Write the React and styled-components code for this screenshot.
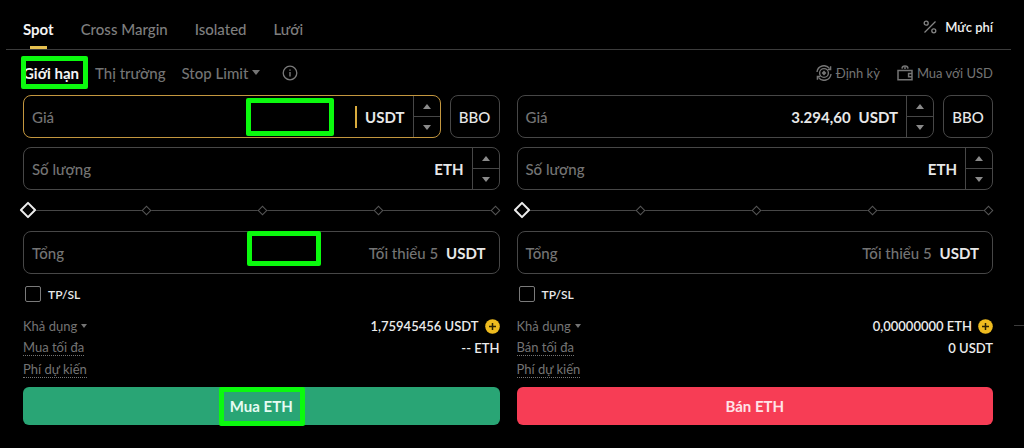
import React, { useState } from 'react';
import styled, { createGlobalStyle } from 'styled-components';

const GlobalStyle = createGlobalStyle`
  * {
    box-sizing: border-box;
  }
  body {
    margin: 0;
    background: #000;
    color: #e8e8e8;
    font-family: Lato, 'Noto Sans', sans-serif;
    font-size: 15px;
  }
  button, input {
    font-family: inherit;
    font-size: inherit;
    color: inherit;
  }
`;

const Page = styled.main`
  position: relative;
  padding: 9px 13px 16px 6px;
`;

const Header = styled.header`
  display: flex;
  justify-content: space-between;
  height: 41px;
  padding: 0 18px 0 17px;
  border-bottom: 1px solid #3c3c3c;
`;

const Tabs = styled.nav`
  display: flex;
  gap: 27px;
`;

const Tab = styled.button`
  position: relative;
  padding: 0;
  border: 0;
  background: none;
  color: ${({ $active }) => $active ? '#f4f4f4' : '#7e7e7e'};
  font-weight: ${({ $active }) => $active ? 700 : 500};
  cursor: pointer;
  &::after {
    content: '';
    display: ${({ $active }) => $active ? 'block' : 'none'};
    position: absolute;
    bottom: 0;
    left: calc(50% - 8px);
    width: 17px;
    height: 3px;
    background: #e6c04f;
  }
`;

const FeeLink = styled.a`
  display: flex;
  align-items: center;
  gap: 8px;
  padding-bottom: 4px;
  color: #f0f0f0;
  font-size: 13px;
  font-weight: 600;
  text-decoration: none;
`;

const SubHeader = styled.div`
  display: flex;
  justify-content: space-between;
  align-items: center;
  height: 45px;
  padding: 0 18px 0 17px;
`;

const OrderTypes = styled.div`
  display: flex;
  align-items: center;
  gap: 16px;
`;

const OrderType = styled.button`
  position: relative;
  display: flex;
  align-items: center;
  gap: 4px;
  padding: 0;
  border: 0;
  background: none;
  color: ${({ $active }) => $active ? '#f4f4f4' : '#747474'};
  font-weight: ${({ $active }) => $active ? 700 : 500};
  cursor: pointer;
`;

const InfoButton = styled.button`
  display: flex;
  margin-left: 6px;
  padding: 0;
  border: 0;
  background: none;
  color: #7a7a7a;
`;

const Links = styled.div`
  display: flex;
  gap: 17px;
`;

const ToolLink = styled.a`
  display: flex;
  align-items: center;
  gap: 4px;
  color: #747474;
  font-size: 13px;
  text-decoration: none;
`;

const Columns = styled.div`
  display: grid;
  grid-template-columns: 1fr 1fr;
  gap: 17px;
  padding: 0 18px 0 17px;
`;

const Form = styled.form`
  display: flex;
  flex-direction: column;
`;

const FieldRow = styled.div`
  position: relative;
  display: flex;
  gap: 9px;
  margin-bottom: 9px;
`;

const Field = styled.div`
  flex: 1;
  min-width: 0;
  display: flex;
  align-items: center;
  height: 43px;
  padding-left: 8px;
  border: 1px solid ${({ $focused }) => $focused ? '#c4973f' : '#474747'};
  border-radius: 8px;
`;

const FieldLabel = styled.label`
  color: #747474;
  font-weight: 500;
  white-space: nowrap;
`;

const FieldInput = styled.input`
  flex: 1;
  min-width: 0;
  padding: 0;
  border: 0;
  outline: 0;
  background: none;
  text-align: right;
  font-weight: 700;
  &::placeholder {
    color: #747474;
    font-weight: 500;
  }
`;

const Caret = styled.span`
  width: 2px;
  height: 22px;
  background: #d9ab3d;
`;

const Unit = styled.span`
  margin: 0 8px;
  font-weight: 700;
  &:last-child {
    margin-right: 13px;
  }
`;

const Stepper = styled.div`
  align-self: stretch;
  display: flex;
  flex-direction: column;
  width: 27px;
  border-left: 1px solid #474747;
`;

const Step = styled.button`
  flex: 1;
  display: flex;
  align-items: center;
  justify-content: center;
  padding: 0;
  border: 0;
  background: none;
  color: #8a8a8a;
  & + & {
    border-top: 1px solid #474747;
  }
`;

const BboButton = styled.button`
  width: 50px;
  padding: 0;
  border: 1px solid #474747;
  border-radius: 8px;
  background: none;
  font-weight: 500;
`;

const SliderWrap = styled.div`
  position: relative;
  height: 20px;
  margin: 1px 0 11px;
  padding-left: 3px;
  display: flex;
  align-items: center;
  justify-content: space-between;
  &::before {
    content: '';
    position: absolute;
    left: 5px;
    right: 5px;
    height: 1px;
    background: #474747;
  }
`;

const Mark = styled.span`
  position: relative;
  width: 7px;
  height: 7px;
  margin: 0 1px;
  border: 1px solid #565656;
  background: #000;
  transform: rotate(45deg);
`;

const Range = styled.input`
  position: absolute;
  left: -1px;
  width: calc(100% + 2px);
  margin: 0;
  appearance: none;
  background: none;
  &::-webkit-slider-thumb {
    appearance: none;
    width: 12px;
    height: 12px;
    border: 2px solid #ececec;
    border-radius: 1px;
    background: #000;
    transform: rotate(45deg);
  }
`;

const CheckLabel = styled.label`
  display: flex;
  align-items: center;
  gap: 7px;
  height: 16px;
  margin: 3px 0 13px 2px;
  font-size: 12px;
  font-weight: 600;
`;

const Checkbox = styled.input`
  appearance: none;
  width: 16px;
  height: 16px;
  margin: 0;
  border: 1px solid #7a7a7a;
  border-radius: 2px;
  &:checked {
    background: #e6c04f;
  }
`;

const Summary = styled.dl`
  margin: 0 0 6px;
  font-size: 13px;
`;

const SummaryRow = styled.div`
  display: flex;
  justify-content: space-between;
  align-items: center;
  height: 22px;
`;

const Term = styled.dt`
  display: flex;
  align-items: center;
  gap: 4px;
  line-height: 15px;
  color: #747474;
  border-bottom: ${({ $dotted }) => $dotted ? '1px dotted #747474' : '0'};
`;

const Amount = styled.dd`
  display: flex;
  align-items: center;
  gap: 6px;
  margin: 0;
  color: #ececec;
  font-weight: 600;
`;

const AddButton = styled.button`
  display: flex;
  padding: 0;
  border: 0;
  background: none;
`;

const Submit = styled.button`
  position: relative;
  display: flex;
  align-items: center;
  justify-content: center;
  height: 38px;
  border: 0;
  border-radius: 6px;
  background: ${({ $side }) => $side === 'buy' ? '#29a575' : '#f73d55'};
  color: ${({ $side }) => $side === 'buy' ? '#e6fbf2' : '#ffe3e7'};
  font-weight: 700;
`;

// green frame laid over a part of the form
const Highlight = styled.span`
  position: absolute;
  left: ${({ $left }) => $left};
  top: ${({ $top }) => $top};
  width: ${({ $width }) => $width};
  height: ${({ $height }) => $height};
  border: 5px solid #0bfa0e;
  border-radius: 2px;
  pointer-events: none;
`;

const EdgeTick = styled.span`
  position: absolute;
  right: 0;
  top: 325px;
  width: 10px;
  height: 1px;
  background: #3c3c3c;
`;

const Triangle = ({ up, width = 8, height = 5 }) => (
  <svg width={width} height={height} viewBox="0 0 8 5" preserveAspectRatio="none" aria-hidden="true">
    <path d={up ? 'M0 5L4 0L8 5Z' : 'M0 0L4 5L8 0Z'} fill="currentColor" />
  </svg>
);

const PercentIcon = () => (
  <svg width="14" height="14" viewBox="0 0 14 14" fill="none" stroke="#858585" strokeWidth="1.3" aria-hidden="true">
    <path d="M12.5 1.5L1.5 12.5" />
    <circle cx="3.2" cy="3.2" r="2" />
    <circle cx="10.8" cy="10.8" r="2" />
  </svg>
);

const InfoIcon = () => (
  <svg width="16" height="16" viewBox="0 0 16 16" fill="none" stroke="currentColor" aria-hidden="true">
    <circle cx="8" cy="8" r="6.8" strokeWidth="1.3" />
    <path d="M8 7V11.5M8 4.4V5.8" strokeWidth="1.4" />
  </svg>
);

const RecurringIcon = () => (
  <svg width="16" height="16" viewBox="0 0 16 16" fill="none" stroke="currentColor" strokeWidth="1.4" aria-hidden="true">
    <path d="M1 7A7 7 0 0 1 13.6 3.6M15 9A7 7 0 0 1 2.4 12.4" />
    <path d="M14.6 1.2V4.6H11.6M1.4 14.8V11.4H4.4" />
    <circle cx="8" cy="8" r="4.4" />
    <path d="M8 5.6L10.4 8L8 10.4L5.6 8Z" fill="currentColor" stroke="none" />
  </svg>
);

const WalletIcon = () => (
  <svg width="16" height="16" viewBox="0 0 16 16" fill="none" stroke="currentColor" strokeWidth="1.5" aria-hidden="true">
    <path d="M1 5.4H15V14.8H1Z" />
    <path d="M15 8.4H11.6V11.8H15" />
    <path d="M5 3.6C5.2 .2 10.8 .2 11 3.6" />
    <path d="M8 2V4" />
  </svg>
);

const PlusIcon = () => (
  <svg width="15" height="15" viewBox="0 0 15 15" aria-hidden="true">
    <circle cx="7.5" cy="7.5" r="7.3" fill="#eebb1f" />
    <path d="M7.5 4V11M4 7.5H11" stroke="#2a2104" strokeWidth="1.5" />
  </svg>
);

const Steps = ({ name }) => (
  <Stepper>
    <Step type="button" aria-label={`${name} +`}><Triangle up /></Step>
    <Step type="button" aria-label={`${name} -`}><Triangle /></Step>
  </Stepper>
);

const OrderForm = ({ side, action, maxLabel, price, available, max }) => {
  const [amount, setAmount] = useState(0);
  const buy = side === 'buy';
  return (
    <Form onSubmit={e => e.preventDefault()}>
      <FieldRow>
        <Field $focused={buy}>
          <FieldLabel htmlFor={`${side}-price`}>Giá</FieldLabel>
          <FieldInput id={`${side}-price`} defaultValue={price} />
          {buy && <Caret />}
          <Unit>USDT</Unit>
          <Steps name="Giá" />
        </Field>
        <BboButton type="button">BBO</BboButton>
        {buy && <Highlight $left="223px" $top="3px" $width="88px" $height="38px" />}
      </FieldRow>
      <FieldRow>
        <Field>
          <FieldLabel htmlFor={`${side}-quantity`}>Số lượng</FieldLabel>
          <FieldInput id={`${side}-quantity`} />
          <Unit>ETH</Unit>
          <Steps name="Số lượng" />
        </Field>
      </FieldRow>
      <SliderWrap>
        {[0, 25, 50, 75, 100].map(n => <Mark key={n} />)}
        <Range
          type="range"
          min="0"
          max="100"
          value={amount}
          aria-label="Số lượng %"
          onChange={e => setAmount(e.target.value)}
        />
      </SliderWrap>
      <FieldRow>
        <Field>
          <FieldLabel htmlFor={`${side}-total`}>Tổng</FieldLabel>
          <FieldInput id={`${side}-total`} placeholder="Tối thiểu 5" />
          <Unit>USDT</Unit>
        </Field>
        {buy && <Highlight $left="224px" $top="0" $width="74px" $height="35px" />}
      </FieldRow>
      <CheckLabel>
        <Checkbox type="checkbox" />
        TP/SL
      </CheckLabel>
      <Summary>
        <SummaryRow>
          <Term>Khả dụng <Triangle width={6} height={4} /></Term>
          <Amount>
            {available}
            <AddButton type="button" aria-label="+"><PlusIcon /></AddButton>
          </Amount>
        </SummaryRow>
        <SummaryRow>
          <Term $dotted>{maxLabel}</Term>
          <Amount>{max}</Amount>
        </SummaryRow>
        <SummaryRow>
          <Term $dotted>Phí dự kiến</Term>
        </SummaryRow>
      </Summary>
      <Submit $side={side}>
        {action}
        {buy && <Highlight $left="calc(50% - 42px)" $top="0" $width="86px" $height="39px" />}
      </Submit>
    </Form>
  );
};

const App = () => (
  <Page>
    <GlobalStyle />
    <Header>
      <Tabs>
        <Tab $active>Spot</Tab>
        <Tab>Cross Margin</Tab>
        <Tab>Isolated</Tab>
        <Tab>Lưới</Tab>
      </Tabs>
      <FeeLink href="#fees"><PercentIcon />Mức phí</FeeLink>
    </Header>
    <SubHeader>
      <OrderTypes>
        <OrderType $active>
          Giới hạn
          <Highlight $left="-2px" $top="-8px" $width="67px" $height="33px" />
        </OrderType>
        <OrderType>Thị trường</OrderType>
        <OrderType>Stop Limit <Triangle /></OrderType>
        <InfoButton aria-label="Info"><InfoIcon /></InfoButton>
      </OrderTypes>
      <Links>
        <ToolLink href="#recurring"><RecurringIcon />Định kỳ</ToolLink>
        <ToolLink href="#buy"><WalletIcon />Mua với USD</ToolLink>
      </Links>
    </SubHeader>
    <Columns>
      <OrderForm
        side="buy"
        action="Mua ETH"
        maxLabel="Mua tối đa"
        available="1,75945456 USDT"
        max="-- ETH"
      />
      <OrderForm
        side="sell"
        action="Bán ETH"
        maxLabel="Bán tối đa"
        price="3.294,60"
        available="0,00000000 ETH"
        max="0 USDT"
      />
    </Columns>
    <EdgeTick />
  </Page>
);

export default App;
